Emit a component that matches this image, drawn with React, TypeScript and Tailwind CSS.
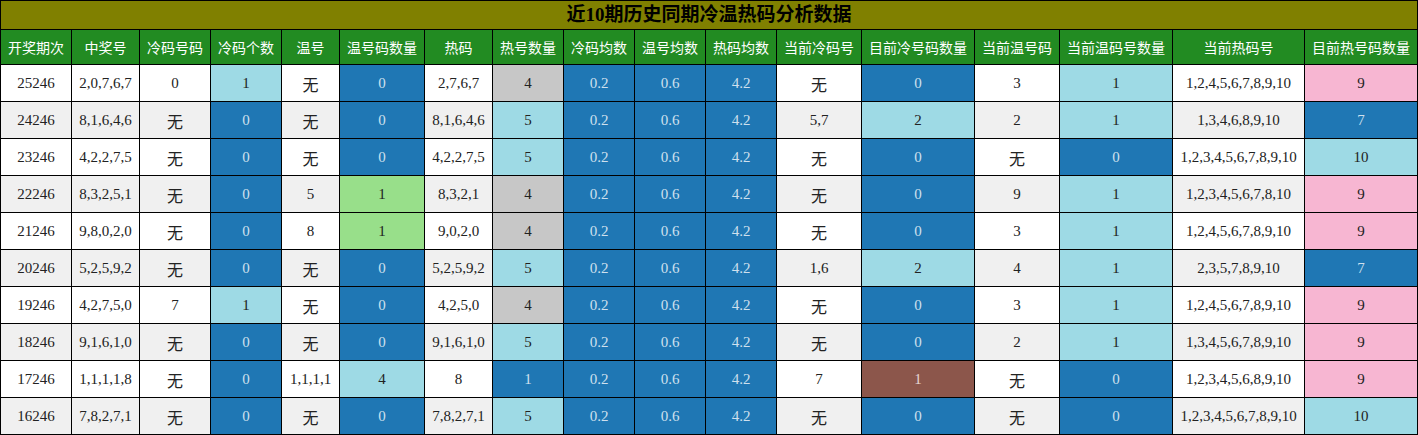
const headers = [
  '开奖期次', '中奖号', '冷码号码', '冷码个数', '温号', '温号码数量', '热码', '热号数量',
  '冷码均数', '温号均数', '热码均数', '当前冷码号', '目前冷号码数量', '当前温号码',
  '当前温码号数量', '当前热码号', '目前热号码数量',
];

// b = blue, c = light blue, g = gray, n = green, p = pink, r = brown, '' = plain
type Cell = [string, string];

const rows: Cell[][] = [
  [['25246', ''], ['2,0,7,6,7', ''], ['0', ''], ['1', 'c'], ['无', ''], ['0', 'b'], ['2,7,6,7', ''], ['4', 'g'], ['0.2', 'b'], ['0.6', 'b'], ['4.2', 'b'], ['无', ''], ['0', 'b'], ['3', ''], ['1', 'c'], ['1,2,4,5,6,7,8,9,10', ''], ['9', 'p']],
  [['24246', ''], ['8,1,6,4,6', ''], ['无', ''], ['0', 'b'], ['无', ''], ['0', 'b'], ['8,1,6,4,6', ''], ['5', 'c'], ['0.2', 'b'], ['0.6', 'b'], ['4.2', 'b'], ['5,7', ''], ['2', 'c'], ['2', ''], ['1', 'c'], ['1,3,4,6,8,9,10', ''], ['7', 'b']],
  [['23246', ''], ['4,2,2,7,5', ''], ['无', ''], ['0', 'b'], ['无', ''], ['0', 'b'], ['4,2,2,7,5', ''], ['5', 'c'], ['0.2', 'b'], ['0.6', 'b'], ['4.2', 'b'], ['无', ''], ['0', 'b'], ['无', ''], ['0', 'b'], ['1,2,3,4,5,6,7,8,9,10', ''], ['10', 'c']],
  [['22246', ''], ['8,3,2,5,1', ''], ['无', ''], ['0', 'b'], ['5', ''], ['1', 'n'], ['8,3,2,1', ''], ['4', 'g'], ['0.2', 'b'], ['0.6', 'b'], ['4.2', 'b'], ['无', ''], ['0', 'b'], ['9', ''], ['1', 'c'], ['1,2,3,4,5,6,7,8,10', ''], ['9', 'p']],
  [['21246', ''], ['9,8,0,2,0', ''], ['无', ''], ['0', 'b'], ['8', ''], ['1', 'n'], ['9,0,2,0', ''], ['4', 'g'], ['0.2', 'b'], ['0.6', 'b'], ['4.2', 'b'], ['无', ''], ['0', 'b'], ['3', ''], ['1', 'c'], ['1,2,4,5,6,7,8,9,10', ''], ['9', 'p']],
  [['20246', ''], ['5,2,5,9,2', ''], ['无', ''], ['0', 'b'], ['无', ''], ['0', 'b'], ['5,2,5,9,2', ''], ['5', 'c'], ['0.2', 'b'], ['0.6', 'b'], ['4.2', 'b'], ['1,6', ''], ['2', 'c'], ['4', ''], ['1', 'c'], ['2,3,5,7,8,9,10', ''], ['7', 'b']],
  [['19246', ''], ['4,2,7,5,0', ''], ['7', ''], ['1', 'c'], ['无', ''], ['0', 'b'], ['4,2,5,0', ''], ['4', 'g'], ['0.2', 'b'], ['0.6', 'b'], ['4.2', 'b'], ['无', ''], ['0', 'b'], ['3', ''], ['1', 'c'], ['1,2,4,5,6,7,8,9,10', ''], ['9', 'p']],
  [['18246', ''], ['9,1,6,1,0', ''], ['无', ''], ['0', 'b'], ['无', ''], ['0', 'b'], ['9,1,6,1,0', ''], ['5', 'c'], ['0.2', 'b'], ['0.6', 'b'], ['4.2', 'b'], ['无', ''], ['0', 'b'], ['2', ''], ['1', 'c'], ['1,3,4,5,6,7,8,9,10', ''], ['9', 'p']],
  [['17246', ''], ['1,1,1,1,8', ''], ['无', ''], ['0', 'b'], ['1,1,1,1', ''], ['4', 'c'], ['8', ''], ['1', 'b'], ['0.2', 'b'], ['0.6', 'b'], ['4.2', 'b'], ['7', ''], ['1', 'r'], ['无', ''], ['0', 'b'], ['1,2,3,4,5,6,8,9,10', ''], ['9', 'p']],
  [['16246', ''], ['7,8,2,7,1', ''], ['无', ''], ['0', 'b'], ['无', ''], ['0', 'b'], ['7,8,2,7,1', ''], ['5', 'c'], ['0.2', 'b'], ['0.6', 'b'], ['4.2', 'b'], ['无', ''], ['0', 'b'], ['无', ''], ['0', 'b'], ['1,2,3,4,5,6,7,8,9,10', ''], ['10', 'c']],
];

const tone: Record<string, string> = {
  b: 'bg-[#1f77b4] text-[#cfe0ee]',
  c: 'bg-[#9edae5] text-[#222]',
  g: 'bg-[#c7c7c7] text-[#222]',
  n: 'bg-[#98df8a] text-[#222]',
  p: 'bg-[#f7b6d2] text-[#222]',
  r: 'bg-[#8c564b] text-[#e6d6d2]',
};

export default function App() {
  return (
    <div className="w-[1418px] h-[435px] bg-white">
      <div
        className="grid gap-px bg-black p-px grid-cols-[70px_67px_70px_70px_57px_84px_67px_70px_70px_70px_70px_84px_112px_84px_112px_131px_112px]"
        style={{ fontFamily: '"Liberation Serif", "Noto Sans CJK SC", serif' }}
      >
        <div className="col-span-17 h-[28px] bg-[#808000] flex items-center justify-center text-[19px] font-bold text-black">
          近10期历史同期冷温热码分析数据
        </div>

        {headers.map((h) => (
          <div
            key={h}
            className="h-[34px] bg-[#228b22] flex items-center justify-center text-[14px] text-white whitespace-nowrap"
            style={{ fontFamily: '"Noto Sans CJK SC", sans-serif' }}
          >
            {h}
          </div>
        ))}

        {rows.map((row, i) =>
          row.map(([v, t], j) => (
            <div
              key={`${i}-${j}`}
              className={`h-[36px] flex items-center justify-center text-[15px] whitespace-nowrap ${
                t ? tone[t] : i % 2 === 1 ? 'bg-[#f0f0f0] text-[#222]' : 'bg-white text-[#222]'
              }`}
            >
              {v === '无' ? <span className="translate-y-[3px] text-[16px]">无</span> : v}
            </div>
          ))
        )}
      </div>
    </div>
  );
}
